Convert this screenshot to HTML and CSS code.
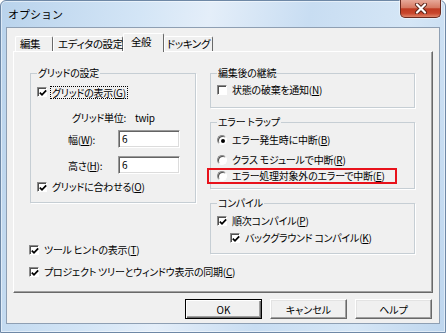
FILE: index.html
```html
<!DOCTYPE html>
<html lang="ja">
<head>
    <meta charset="UTF-8">
    <meta name="viewport" content="width=device-width, initial-scale=1.0">
    <title>オプション</title>
    <link rel="stylesheet" href="styles.css">
</head>
<body>

    <div class="window">
        <div class="titlebar">
            <span class="title">オプション</span>
            <button class="close-btn" aria-label="閉じる">
                <svg width="14" height="11" viewBox="0 0 14 11">
                    <path d="M3 1.5 L11 9.5 M11 1.5 L3 9.5" stroke="#5a2418" stroke-width="4" stroke-linecap="round"/>
                    <path d="M3 1.5 L11 9.5 M11 1.5 L3 9.5" stroke="#fff" stroke-width="2.2" stroke-linecap="round"/>
                </svg>
            </button>
        </div>

        <div class="client">
            <div class="tabs">
                <div class="tab tab-edit">編集</div>
                <div class="tab tab-editor">エディタの設定</div>
                <div class="tab tab-general active">全般</div>
                <div class="tab tab-docking">ドッキング</div>
            </div>

            <div class="tab-panel">
                <div class="col-left">
                    <fieldset class="group group-grid">
                        <legend>グリッドの設定</legend>
                        <label class="row">
                            <span class="cb"><svg width="8" height="8" viewBox="0 0 8 8"><path d="M0.8 3.6 L3 5.8 L7.2 1.4" fill="none" stroke="#000" stroke-width="1.8"/></svg></span>
                            <span class="focus">グリッドの表示(<u>G</u>)</span>
                        </label>
                        <div class="unit">グリッド単位:<span class="unit-val">twip</span></div>
                        <div class="fields">
                            <span>幅(<u>W</u>):</span>
                            <span class="textbox">6</span>
                            <span>高さ(<u>H</u>):</span>
                            <span class="textbox">6</span>
                        </div>
                        <label class="row">
                            <span class="cb"><svg width="8" height="8" viewBox="0 0 8 8"><path d="M0.8 3.6 L3 5.8 L7.2 1.4" fill="none" stroke="#000" stroke-width="1.8"/></svg></span>
                            <span>グリッドに合わせる(<u>O</u>)</span>
                        </label>
                    </fieldset>

                    <div class="bottom-opts">
                        <label class="row">
                            <span class="cb"><svg width="8" height="8" viewBox="0 0 8 8"><path d="M0.8 3.6 L3 5.8 L7.2 1.4" fill="none" stroke="#000" stroke-width="1.8"/></svg></span>
                            <span>ツール ヒントの表示(<u>T</u>)</span>
                        </label>
                        <label class="row">
                            <span class="cb"><svg width="8" height="8" viewBox="0 0 8 8"><path d="M0.8 3.6 L3 5.8 L7.2 1.4" fill="none" stroke="#000" stroke-width="1.8"/></svg></span>
                            <span>プロジェクト ツリーとウィンドウ表示の同期(<u>C</u>)</span>
                        </label>
                    </div>
                </div>

                <div class="col-right">
                    <fieldset class="group group-continue">
                        <legend>編集後の継続</legend>
                        <label class="row">
                            <span class="cb"></span>
                            <span>状態の破棄を通知(<u>N</u>)</span>
                        </label>
                    </fieldset>

                    <fieldset class="group group-trap">
                        <legend>エラー トラップ</legend>
                        <label class="row">
                            <span class="radio on"></span>
                            <span>エラー発生時に中断(<u>B</u>)</span>
                        </label>
                        <label class="row">
                            <span class="radio"></span>
                            <span>クラス モジュールで中断(<u>R</u>)</span>
                        </label>
                        <label class="row highlight">
                            <span class="radio"></span>
                            <span>エラー処理対象外のエラーで中断(<u>E</u>)</span>
                        </label>
                    </fieldset>

                    <fieldset class="group group-compile">
                        <legend>コンパイル</legend>
                        <label class="row">
                            <span class="cb"><svg width="8" height="8" viewBox="0 0 8 8"><path d="M0.8 3.6 L3 5.8 L7.2 1.4" fill="none" stroke="#000" stroke-width="1.8"/></svg></span>
                            <span>順次コンパイル(<u>P</u>)</span>
                        </label>
                        <label class="row sub">
                            <span class="cb"><svg width="8" height="8" viewBox="0 0 8 8"><path d="M0.8 3.6 L3 5.8 L7.2 1.4" fill="none" stroke="#000" stroke-width="1.8"/></svg></span>
                            <span>バックグラウンド コンパイル(<u>K</u>)</span>
                        </label>
                    </fieldset>
                </div>
            </div>

            <div class="buttons">
                <button class="btn default">OK</button>
                <button class="btn">キャンセル</button>
                <button class="btn">ヘルプ</button>
            </div>
        </div>
    </div>

</body>
</html>
```

FILE: styles.css
```css
* {
    box-sizing: border-box;
}

html, body {
    margin: 0;
    padding: 0;
}

body {
    width: 446px;
    height: 333px;
    overflow: hidden;
    background: #fff;
    color: #000;
    font-family: "Noto Sans CJK JP", "Noto Sans", sans-serif;
    font-size: 10px;
    letter-spacing: -0.25px;
    font-feature-settings: "palt";
}

/* window frame */
.window {
    width: 446px;
    height: 333px;
    border: 1px solid #6e88a6;
    border-radius: 6px 6px 0 0;
    background: linear-gradient(100deg, #b9d3ec 0%, #d3e5f6 28%, #e4eef9 42%, #c8ddf2 62%, #d5e6f6 82%, #bed6ee 100%);
    box-shadow: inset 0 0 0 1px rgba(255, 255, 255, 0.5);
    display: flex;
    flex-direction: column;
}

.titlebar {
    height: 26px;
    display: flex;
    align-items: flex-start;
}

.title {
    margin: 6px 0 0 7px;
    font-size: 11px;
    line-height: 14px;
    letter-spacing: 0;
    font-feature-settings: normal;
}

.close-btn {
    margin: -1px 4px 0 auto;
    width: 41px;
    height: 18px;
    padding: 0;
    border: 1px solid #6b2a1f;
    border-top: none;
    border-radius: 0 0 5px 5px;
    background: linear-gradient(#e7a999 0%, #d67a63 45%, #bf3b22 52%, #c8462c 78%, #e0856a 100%);
    box-shadow: 0 0 0 1px rgba(255, 255, 255, 0.45);
    display: flex;
    align-items: center;
    justify-content: center;
}

.client {
    margin: 0 5px;
    height: 297px;
    padding: 5px 6px 4px;
    background: #f0f0f0;
    border: 1px solid #8e9fb3;
}

/* tabs */
.tabs {
    height: 18px;
    padding-left: 2px;
    display: flex;
    align-items: flex-end;
    position: relative;
    z-index: 1;
}

.tab {
    height: 15px;
    padding-left: 4px;
    line-height: 14px;
    font-size: 10.5px;
    letter-spacing: -0.4px;
    white-space: nowrap;
    border: 1px solid #fff;
    border-right-color: #696969;
    border-bottom: none;
    border-radius: 2px 2px 0 0;
    background: #f0f0f0;
}

.tab-edit { width: 38px; }
.tab-editor { width: 70px; }
.tab-general { width: 41px; }
.tab-docking { width: 49px; padding-left: 2px; }

.tab.active {
    height: 19px;
    margin-bottom: -1px;
    padding-top: 1px;
    padding-left: 7px;
}

.tab-panel {
    height: 242px;
    padding: 14px 17px 0 16px;
    display: flex;
    gap: 14px;
    border: 1px solid #fff;
    border-right-color: #696969;
    border-bottom-color: #696969;
    box-shadow: inset -1px -1px 0 #a0a0a0;
}

.col-left {
    width: 166px;
    display: flex;
    flex-direction: column;
    padding-bottom: 12px;
}

.col-right {
    width: 205px;
}

/* group boxes */
.group {
    margin: 0;
    min-width: 0;
    padding: 0 6px;
    border: 1px solid #c6ced4;
    box-shadow: 1px 1px 0 #fff;
}

.group legend {
    padding: 0 1px;
    line-height: 14px;
}

.row {
    height: 16px;
    line-height: 14px;
    display: flex;
    align-items: center;
    gap: 5px;
    white-space: nowrap;
}

.cb {
    flex: none;
    width: 10px;
    height: 10px;
    background: #fff;
    border: 1px solid;
    border-color: #8a8a8a #fff #fff #8a8a8a;
    box-shadow: inset 1px 1px 0 #505050;
    display: flex;
    align-items: center;
    justify-content: center;
}

.cb svg {
    flex: none;
    margin: 1px 0 0 1px;
}

.radio {
    flex: none;
    width: 10px;
    height: 10px;
    border-radius: 50%;
    background: #fff;
    border: 1px solid;
    border-color: #8a8a8a #fff #fff #8a8a8a;
    box-shadow: inset 1px 1px 0 #505050;
    display: flex;
    align-items: center;
    justify-content: center;
}

.radio.on::after {
    content: "";
    width: 4px;
    height: 4px;
    margin: 1px 0 0 1px;
    border-radius: 50%;
    background: #000;
}

/* left group */
.group-grid {
    padding-top: 4px;
    padding-bottom: 7px;
}

.focus {
    margin-left: -2px;
    padding: 0 1px;
    line-height: 11px;
    border: 1px dotted #000;
}

.unit {
    margin: 10px 0 0 35px;
    line-height: 16px;
}

.unit-val {
    margin-left: 9px;
}

.fields {
    display: grid;
    grid-template-columns: 50px 62px;
    row-gap: 8px;
    align-items: center;
    margin: 4px 0 5px 31px;
}

.textbox {
    height: 18px;
    padding-left: 3px;
    line-height: 15px;
    background: #fff;
    border: 1px solid;
    border-color: #9a9a9a #fff #fff #9a9a9a;
    box-shadow: inset 1px 1px 0 #646464, inset -1px -1px 0 #dcdcdc;
}

.bottom-opts {
    margin-top: auto;
    margin-left: -1px;
    display: flex;
    flex-direction: column;
    gap: 6px;
}

/* right groups */
.group-continue {
    padding-top: 2px;
    padding-bottom: 9px;
}

.group-trap {
    margin-top: 7px;
    padding-top: 3px;
    padding-bottom: 4px;
}

.group-trap .row + .row {
    margin-top: 4px;
}

.group-trap .row.highlight {
    margin: 0 0 0 -10px;
    width: 190px;
    padding-left: 8px;
    border: 2px solid #e8121b;
}

.group-compile {
    margin-top: 7px;
    padding-top: 3px;
    padding-bottom: 7px;
}

.row.sub {
    margin-top: 1px;
    padding-left: 13px;
}

/* buttons */
.buttons {
    margin-top: 6px;
    padding-right: 1px;
    display: flex;
    justify-content: flex-end;
    gap: 8px;
}

.btn {
    width: 77px;
    height: 20px;
    padding: 0;
    font: inherit;
    color: #000;
    background: #f0f0f0;
    border: 1px solid;
    border-color: #fff #696969 #696969 #fff;
    box-shadow: inset -1px -1px 0 #a0a0a0, inset 1px 1px 0 #e3e3e3;
}

.btn.default {
    border-color: #000;
    box-shadow: inset 1px 1px 0 #fff, inset -1px -1px 0 #696969, inset -2px -2px 0 #a0a0a0;
}
```
